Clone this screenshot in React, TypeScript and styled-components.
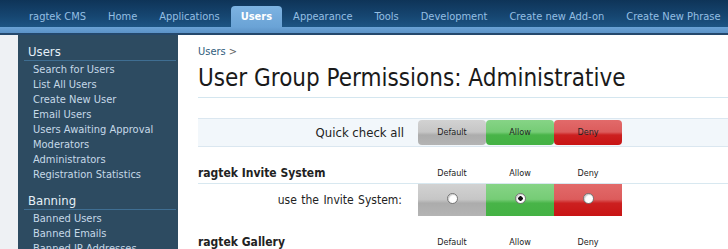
import styled, { createGlobalStyle } from 'styled-components';

const GlobalStyle = createGlobalStyle`
  html, body {
    margin: 0;
    padding: 0;
    background: #fff;
    font-family: "DejaVu Sans Condensed", "DejaVu Sans", sans-serif;
  }
`;

const TABS = ['ragtek CMS', 'Home', 'Applications', 'Users', 'Appearance', 'Tools', 'Development', 'Create new Add-on', 'Create New Phrase'];

const SIDEBAR = [
  {
    title: 'Users',
    links: ['Search for Users', 'List All Users', 'Create New User', 'Email Users', 'Users Awaiting Approval', 'Moderators', 'Administrators', 'Registration Statistics'],
  },
  {
    title: 'Banning',
    links: ['Banned Users', 'Banned Emails', 'Banned IP Addresses'],
  },
];

type Choice = 'default' | 'allow' | 'deny';
const CHOICES: { key: Choice; label: string }[] = [
  { key: 'default', label: 'Default' },
  { key: 'allow', label: 'Allow' },
  { key: 'deny', label: 'Deny' },
];

const PERMISSION_GROUPS = [
  { title: 'ragtek Invite System', rows: [{ label: 'use the Invite System:', value: 'allow' as Choice }] },
  { title: 'ragtek Gallery', rows: [] as { label: string; value: Choice }[] },
];

function getGradient(choice: Choice) {
  switch (choice) {
    case 'default':
      return 'linear-gradient(to bottom, #d2d2d2 0%, #c6c6c6 48%, #acacac 60%, #b4b4b4 100%)';
    case 'allow':
      return 'linear-gradient(to bottom, #86d486 0%, #76cc76 48%, #48b448 60%, #44b244 100%)';
    case 'deny':
      return 'linear-gradient(to bottom, #e26a6a 0%, #dc5c5c 48%, #cc2020 60%, #c81414 100%)';
  }
}

export default function App() {
  return (
    <>
      <GlobalStyle />
      <Header>
        <TabBar>
          {TABS.map(tab => (
            <Tab key={tab} active={tab === 'Users'}>{tab}</Tab>
          ))}
        </TabBar>
        <SubStrip />
      </Header>
      <Main>
        <Gutter />
        <Sidebar>
          {SIDEBAR.map(section => (
            <SideSection key={section.title}>
              <SideHeading>{section.title}</SideHeading>
              {section.links.map(link => (
                <SideLink key={link}>{link}</SideLink>
              ))}
            </SideSection>
          ))}
        </Sidebar>
        <Content>
          <Breadcrumb>
            <a>Users</a> &gt;
          </Breadcrumb>
          <Title>User Group Permissions: Administrative</Title>
          <QuickBar>
            <QuickLabel>Quick check all</QuickLabel>
            {CHOICES.map(c => (
              <QuickButton key={c.key} choice={c.key}>{c.label}</QuickButton>
            ))}
          </QuickBar>
          {PERMISSION_GROUPS.map(group => (
            <Group key={group.title}>
              <GroupHeader>
                <GroupTitle>{group.title}</GroupTitle>
                {CHOICES.map(c => (
                  <ColumnLabel key={c.key}>{c.label}</ColumnLabel>
                ))}
              </GroupHeader>
              {group.rows.map(row => (
                <PermRow key={row.label}>
                  <PermLabel>{row.label}</PermLabel>
                  {CHOICES.map(c => (
                    <PermCell key={c.key} choice={c.key}>
                      <Radio checked={row.value === c.key} />
                    </PermCell>
                  ))}
                </PermRow>
              ))}
            </Group>
          ))}
        </Content>
      </Main>
    </>
  );
}

const Header = styled.div`
  display: flex;
  flex-direction: column;
`;

const TabBar = styled.div`
  display: flex;
  align-items: flex-end;
  height: 27px;
  padding-left: 18px;
  background: linear-gradient(to bottom, #0e3458 0%, #164671 60%, #1d5584 100%);
`;

const Tab = styled.div<{ active?: boolean }>`
  height: 21px;
  line-height: 21px;
  padding: 0 ${props => (props.active ? '10px' : '11px')};
  font-size: 11px;
  white-space: nowrap;
  color: ${props => (props.active ? '#fff' : '#94bfe3')};
  font-weight: ${props => (props.active ? 700 : 400)};
  background: ${props => (props.active ? 'linear-gradient(to bottom, #7db3e2, #6aa3d6)' : 'transparent')};
  border-radius: 4px 4px 0 0;
`;

const SubStrip = styled.div`
  height: 6px;
  background: linear-gradient(to bottom, #6aa3d6, #5b92c6);
  border-bottom: 2px solid #24486c;
`;

const Main = styled.div`
  display: flex;
  align-items: stretch;
  height: 214px;
  overflow: hidden;
`;

const Gutter = styled.div`
  width: 18px;
  flex-shrink: 0;
  background: #eef1f4;
`;

const Sidebar = styled.div`
  width: 160px;
  flex-shrink: 0;
  background: #2d4b61;
  padding-top: 9px;
`;

const SideSection = styled.div`
  margin-bottom: 11px;
`;

const SideHeading = styled.div`
  margin: 0 2px 1px 6px;
  padding-left: 4px;
  height: 16px;
  line-height: 16px;
  font-size: 13px;
  color: #e6f0f8;
  border-bottom: 1px solid #3f6e92;
`;

const SideLink = styled.div`
  padding-left: 15px;
  font-size: 11px;
  line-height: 15px;
  color: #c6d9e8;
  white-space: nowrap;
`;

const Content = styled.div`
  flex: 1;
  min-width: 0;
  padding: 10px 0 0 20px;
`;

const Breadcrumb = styled.div`
  font-size: 11px;
  line-height: 14px;
  color: #666;

  a {
    color: #2f5c7c;
  }
`;

const Title = styled.h1`
  margin: 4px 0 0;
  padding-bottom: 4px;
  font-size: 24px;
  font-weight: 400;
  line-height: 30px;
  color: #1a1a1a;
  border-bottom: 1px solid #d4e6ef;
`;

const QuickBar = styled.div`
  display: grid;
  grid-template-columns: 220px 68px 68px 68px;
  align-items: center;
  margin: 20px 0 2px;
  padding: 1px 0;
  background: #f2f7fb;
  border-top: 1px solid #dbe7f0;
  border-bottom: 1px solid #dbe7f0;
`;

const QuickLabel = styled.div`
  padding-right: 14px;
  text-align: right;
  font-size: 13px;
  color: #222;
`;

const QuickButton = styled.div<{ choice: Choice }>`
  height: 25px;
  line-height: 25px;
  text-align: center;
  font-size: 9px;
  color: #222;
  border-radius: 4px;
  background: ${props => getGradient(props.choice)};
`;

const Group = styled.div`
  margin-top: 16px;
`;

const GroupHeader = styled.div`
  display: grid;
  grid-template-columns: 220px 68px 68px 68px;
  align-items: center;
  height: 20px;
  border-bottom: 1px solid #d8e8f0;
`;

const GroupTitle = styled.div`
  font-size: 12px;
  font-weight: 700;
  color: #222;
  white-space: nowrap;
`;

const ColumnLabel = styled.div`
  text-align: center;
  font-size: 9px;
  color: #222;
`;

const PermRow = styled.div`
  display: grid;
  grid-template-columns: 220px 68px 68px 68px;
  height: 32px;
  align-items: stretch;
`;

const PermLabel = styled.div`
  display: flex;
  align-items: center;
  justify-content: flex-end;
  padding-right: 16px;
  font-size: 12px;
  color: #222;
  word-spacing: 1px;
`;

const PermCell = styled.div<{ choice: Choice }>`
  display: flex;
  align-items: center;
  justify-content: center;
  padding-bottom: 4px;
  background: ${props => getGradient(props.choice)};
`;

const Radio = styled.span<{ checked?: boolean }>`
  display: block;
  width: 11px;
  height: 11px;
  box-sizing: border-box;
  border-radius: 50%;
  border: 1px solid #777;
  background: radial-gradient(circle, ${props => (props.checked ? '#111 0 2px, #fff 2.5px' : '#fff 0, #fff 100%')});
  box-shadow: inset 1px 1px 1px rgba(0, 0, 0, 0.2);
`;
